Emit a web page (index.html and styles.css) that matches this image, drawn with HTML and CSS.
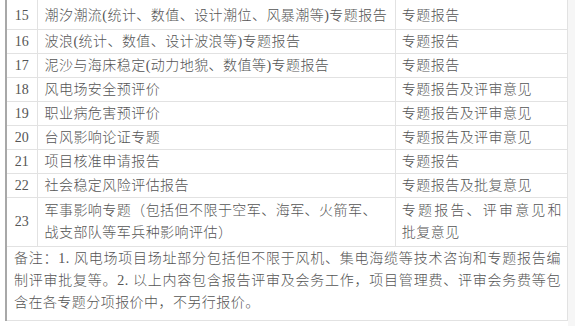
FILE: index.html
```html
<!DOCTYPE html>
<html lang="zh">
<head>
<meta charset="utf-8">
<link rel="stylesheet" href="styles.css">
</head>
<body>
<div class="page">
<table class="quote">
  <colgroup><col class="c-no"><col class="c-item"><col class="c-out"></colgroup>
  <tr class="first"><td class="no">15</td><td>潮汐潮流(统计、数值、设计潮位、风暴潮等)专题报告</td><td>专题报告</td></tr>
  <tr><td class="no">16</td><td>波浪(统计、数值、设计波浪等)专题报告</td><td>专题报告</td></tr>
  <tr><td class="no">17</td><td>泥沙与海床稳定(动力地貌、数值等)专题报告</td><td>专题报告</td></tr>
  <tr><td class="no">18</td><td>风电场安全预评价</td><td>专题报告及评审意见</td></tr>
  <tr><td class="no">19</td><td>职业病危害预评价</td><td>专题报告及评审意见</td></tr>
  <tr><td class="no">20</td><td>台风影响论证专题</td><td>专题报告及评审意见</td></tr>
  <tr><td class="no">21</td><td>项目核准申请报告</td><td>专题报告</td></tr>
  <tr><td class="no">22</td><td>社会稳定风险评估报告</td><td>专题报告及批复意见</td></tr>
  <tr class="tall"><td class="no">23</td><td>军事影响专题（包括但不限于空军、海军、火箭军、战支部队等军兵种影响评估）</td><td><span class="jline">专题报告、评审意见和</span>批复意见</td></tr>
  <tr class="notes"><td colspan="3">备注：1. 风电场项目场址部分包括但不限于风机、集电海缆等技术咨询和专题报告编制评审批复等。2. 以上内容包含报告评审及会务工作，项目管理费、评审会务费等包含在各专题分项报价中，不另行报价。</td></tr>
</table>
</div>
</body>
</html>
```

FILE: styles.css
```css
html, body {
  margin: 0;
  padding: 0;
  background: #f6f6f6;
}
.page {
  width: 568px;
  height: 326px;
  background: #ffffff;
  padding-left: 5px;
  box-sizing: border-box;
  overflow: hidden;
}
.quote {
  border-collapse: collapse;
  table-layout: fixed;
  width: 563px;
  border-left: 2px solid #a8a8a8;
  font-family: "Liberation Serif", "Noto Sans CJK SC", serif;
  font-size: 14px;
  font-weight: 300;
  letter-spacing: 0.45px;
  color: #555555;
}
.c-no { width: 31px; }
.c-item { width: 358px; }
.c-out { width: 172px; }
.quote td {
  border: 1px solid #e2e2e2;
  padding: 0 5px 0 6px;
  line-height: 23px;
  height: 23px;
  vertical-align: middle;
  text-align: left;
}
.quote tr:first-child td { border-top: none; }
.quote td:first-child { border-left: none; }
.quote td.no {
  text-align: center;
  padding: 0;
  letter-spacing: 0;
}
.quote td:nth-child(2) { padding-left: 7px; }
.quote tr.first td { height: 28px; padding-top: 1px; }
.quote tr.tall td {
  line-height: 22px;
  padding-top: 2px;
  padding-bottom: 2px;
}
.jline {
  display: block;
  text-align: justify;
  text-align-last: justify;
}
.quote tr.notes td {
  line-height: 22px;
  padding: 1px 6px 6px 7px;
  text-align: justify;
}
```
